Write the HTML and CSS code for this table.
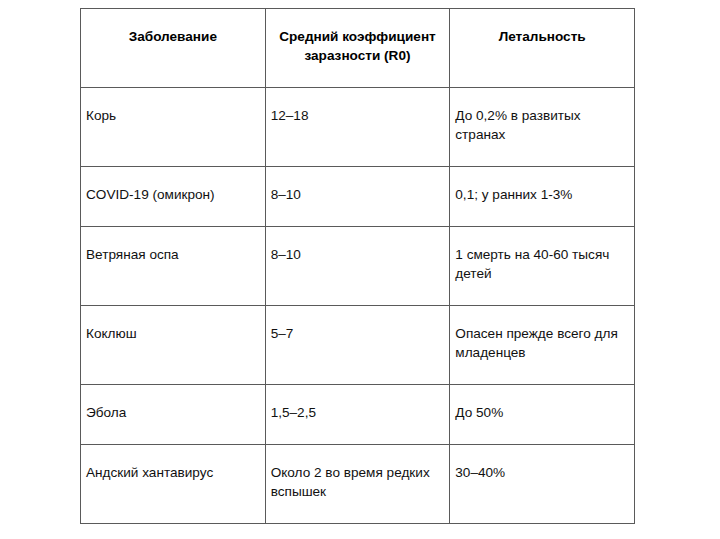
FILE: index.html
```html
<!DOCTYPE html>
<html lang="ru">
<head>
<meta charset="utf-8">
<link rel="stylesheet" href="styles.css">
</head>
<body>
<table class="data">
  <thead>
    <tr>
      <th>Заболевание</th>
      <th>Средний коэффициент заразности (R0)</th>
      <th>Летальность</th>
    </tr>
  </thead>
  <tbody>
    <tr><td>Корь</td><td>12–18</td><td>До 0,2% в развитых странах</td></tr>
    <tr><td>COVID-19 (омикрон)</td><td>8–10</td><td>0,1; у ранних 1-3%</td></tr>
    <tr><td>Ветряная оспа</td><td>8–10</td><td>1 смерть на 40-60 тысяч детей</td></tr>
    <tr><td>Коклюш</td><td>5–7</td><td>Опасен прежде всего для младенцев</td></tr>
    <tr><td>Эбола</td><td>1,5–2,5</td><td>До 50%</td></tr>
    <tr><td>Андский хантавирус</td><td>Около 2 во время редких вспышек</td><td>30–40%</td></tr>
  </tbody>
</table>
</body>
</html>
```

FILE: styles.css
```css
html, body {
  margin: 0;
  padding: 0;
  background: #fff;
}
body {
  font-family: "Liberation Sans", Arial, sans-serif;
  font-size: 13.6px;
  line-height: 19px;
  color: #111;
  padding: 8px 0 0 80px;
}
.data {
  border-collapse: collapse;
  table-layout: fixed;
  width: 555px;
}
.data th,
.data td {
  border: 1px solid #5a5a5a;
  padding: 18px 5px 22px 5px;
  vertical-align: top;
  text-align: left;
  width: 33.33%;
}
.data th {
  font-weight: bold;
  text-align: center;
  color: #000;
}
.data td {
  padding-right: 8px;
}
```
